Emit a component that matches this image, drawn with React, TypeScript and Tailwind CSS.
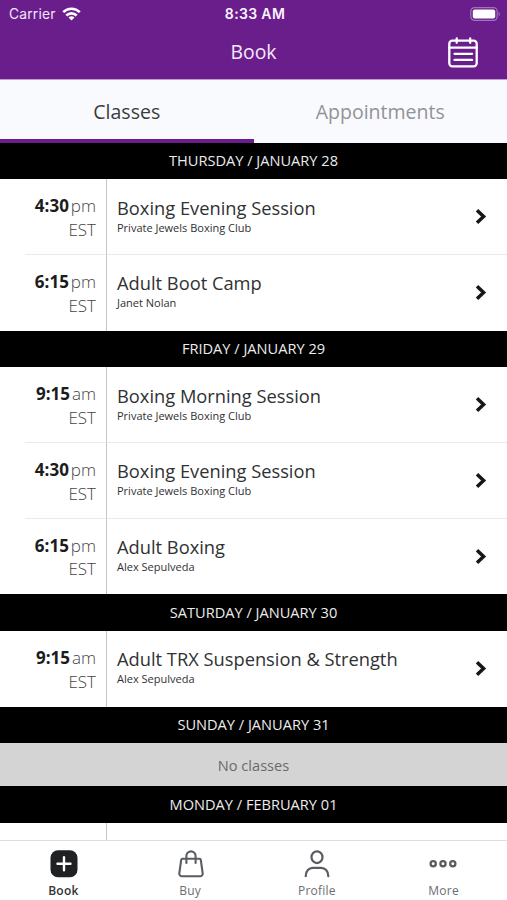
import { useState } from "react";

type ClassItem = { time: string; period: string; title: string; staff: string };
type Day = { label: string; classes: ClassItem[] };

const days: Day[] = [
  {
    label: "THURSDAY / JANUARY 28",
    classes: [
      { time: "4:30", period: "pm", title: "Boxing Evening Session", staff: "Private Jewels Boxing Club" },
      { time: "6:15", period: "pm", title: "Adult Boot Camp", staff: "Janet Nolan" }
    ]
  },
  {
    label: "FRIDAY / JANUARY 29",
    classes: [
      { time: "9:15", period: "am", title: "Boxing Morning Session", staff: "Private Jewels Boxing Club" },
      { time: "4:30", period: "pm", title: "Boxing Evening Session", staff: "Private Jewels Boxing Club" },
      { time: "6:15", period: "pm", title: "Adult Boxing", staff: "Alex Sepulveda" }
    ]
  },
  {
    label: "SATURDAY / JANUARY 30",
    classes: [
      { time: "9:15", period: "am", title: "Adult TRX Suspension & Strength", staff: "Alex Sepulveda" }
    ]
  },
  { label: "SUNDAY / JANUARY 31", classes: [] }
];

const tabs = ["Classes", "Appointments"];

function StatusBar() {
  return (
    <div className="grid h-[27px] grid-cols-[1fr_auto_1fr] items-center pr-[6px] pl-[9px] font-['Inter',sans-serif] text-[13.8px] text-[#f3e6fa]">
      <div className="flex items-center gap-[6px]">
        <span className="pt-px tracking-[0.015em]">Carrier</span>
        <svg width="19" height="14" viewBox="0 0 19 14" fill="none" stroke="#fff" strokeWidth="2.6">
          <path d="M1.2 5.2a11.8 11.8 0 0 1 16.6 0" />
          <path d="M4.3 8.5a7.4 7.4 0 0 1 10.4 0" />
          <path d="M9.5 13.6 6.5 10.6a4.3 4.3 0 0 1 6 0Z" fill="#fff" stroke="none" />
        </svg>
      </div>
      <span className="text-[14px] font-semibold tracking-[0.025em] text-[#fbf3ff]">8:33 AM</span>
      <svg className="justify-self-end" width="31" height="14" viewBox="0 0 31 14" fill="none">
        <rect x="0.8" y="0.6" width="26.4" height="12.8" rx="3.8" stroke="#a272bd" strokeWidth="1.2" />
        <rect x="2.8" y="2.5" width="22.4" height="9" rx="2" fill="#fff" />
        <path d="M28.7 4.8c1.6.7 1.6 3.7 0 4.4Z" fill="#a272bd" />
      </svg>
    </div>
  );
}

function CalendarIcon() {
  return (
    <svg width="30" height="31" viewBox="0 0 30 31" fill="none" stroke="#fff" strokeWidth="2.3" strokeLinecap="round">
      <rect x="1.3" y="3.7" width="27.4" height="25.6" rx="3" />
      <path d="M1.3 10.6h27.4M8.7 1.4v4.4M22.2 1.4v4.4M6.5 16.8h17.6M6.5 22.9h17.6" />
    </svg>
  );
}

function ClassRow({ item, last }: { item: ClassItem; last: boolean }) {
  return (
    <div className="flex h-[75.75px] bg-white pl-[25px]">
      <div
        className={[
          "w-[82px] shrink-0 border-r border-r-[#c4c4c4] pt-[15.2px] pr-[10px] text-right text-[17px] leading-[23.5px]",
          last ? "" : "border-b border-b-[#e9e9e9]"
        ].join(" ")}
      >
        <div className="whitespace-nowrap">
          <span className="font-bold text-[#1c1c1c]">{item.time}</span>
          <span className="ml-[2px] font-light text-[#444]">{item.period}</span>
        </div>
        <div className="font-light text-[#444]">EST</div>
      </div>
      <div
        className={[
          "flex grow items-start justify-between pl-[10px] pr-[19px]",
          last ? "" : "border-b border-b-[#e9e9e9]"
        ].join(" ")}
      >
        <div className="whitespace-nowrap text-[#303133]">
          <div className="pt-[15.5px] text-[18.3px] leading-[25px]">{item.title}</div>
          <div className="text-[11px] leading-[16px]">{item.staff}</div>
        </div>
        <svg className="mt-[29px]" width="14" height="17" viewBox="0 0 14 17" fill="none" stroke="#161616" strokeWidth="3.5">
          <path d="M3 2.2 9.6 8.5 3 14.8" />
        </svg>
      </div>
    </div>
  );
}

function DayHeader({ label }: { label: string }) {
  return (
    <div className="flex h-[36.5px] items-center justify-center bg-black pt-[0.6px] text-[14.6px] text-[#ececec]">
      {label}
    </div>
  );
}

const navItems = [
  {
    label: "Book",
    icon: (
      <svg className="ml-px" width="28" height="28" viewBox="0 0 28 28">
        <rect x="0.5" y="0.3" width="27" height="27" rx="7.5" fill="#1f2123" />
        <path d="M14 7.3v13M7.5 13.8h13" stroke="#fff" strokeWidth="2.4" strokeLinecap="round" />
      </svg>
    )
  },
  {
    label: "Buy",
    icon: (
      <svg className="ml-px" width="28" height="28" viewBox="0 0 28 28" fill="none" stroke="#595d61" strokeWidth="2.1" strokeLinecap="round" strokeLinejoin="round">
        <path d="M5.6 8.7h16.8a1.4 1.4 0 0 1 1.4 1.2l1.9 13.4a2.6 2.6 0 0 1-2.6 2.9H4.9a2.6 2.6 0 0 1-2.6-2.9L4.2 9.9a1.4 1.4 0 0 1 1.4-1.2Z" />
        <path d="M9.4 13V6a4.6 4.6 0 0 1 9.2 0V13" />
      </svg>
    )
  },
  {
    label: "Profile",
    icon: (
      <svg width="28" height="28" viewBox="0 0 28 28" fill="none" stroke="#595d61" strokeWidth="2.2" strokeLinecap="round">
        <ellipse cx="14" cy="7.2" rx="5.5" ry="5.9" />
        <path d="M2.7 26.2c0-5.2 3.4-8.3 7-8.3h8.6c3.6 0 7 3.1 7 8.3" />
      </svg>
    )
  },
  {
    label: "More",
    icon: (
      <svg className="mr-px" width="28" height="28" viewBox="0 0 28 28" fill="none" stroke="#595d61" strokeWidth="2.3">
        <circle cx="4.2" cy="13.7" r="2.6" />
        <circle cx="14" cy="13.7" r="2.6" />
        <circle cx="23.8" cy="13.7" r="2.6" />
      </svg>
    )
  }
];

export default function App() {
  const [tab, setTab] = useState("Classes");
  const [page, setPage] = useState("Book");

  return (
    <div className="flex h-[900px] w-[507px] flex-col overflow-hidden bg-white font-['Open_Sans',sans-serif]">
      <header className="h-[79px] shrink-0 bg-[#6a1e8c]">
        <StatusBar />
        <div className="grid h-[50px] grid-cols-[1fr_auto_1fr] items-center pr-[29px]">
          <h1 className="col-start-2 pl-[29px] text-[19.4px] text-[#f6e9fc]">Book</h1>
          <button className="justify-self-end" aria-label="Calendar">
            <CalendarIcon />
          </button>
        </div>
      </header>

      <nav className="grid h-[63.6px] shrink-0 grid-cols-2 border-t border-t-[#c39bd4] bg-[#f9fafd]">
        {tabs.map((t) => (
          <button
            key={t}
            onClick={() => setTab(t)}
            className={[
              "border-b-4 pt-[4px] text-[19.5px]",
              tab === t ? "border-b-[#6a1e8c] text-[#3a3c3e]" : "border-b-transparent text-[#919396]"
            ].join(" ")}
          >
            {t}
          </button>
        ))}
      </nav>

      <main className="min-h-0 grow overflow-hidden">
        {days.map((day) => (
          <section key={day.label}>
            <DayHeader label={day.label} />
            {day.classes.map((item, i) => (
              <ClassRow key={item.time} item={item} last={i === day.classes.length - 1} />
            ))}
            {day.classes.length === 0 && (
              <div className="flex h-[43px] items-center justify-center bg-[#d4d4d4] pt-[2px] text-[14.6px] text-[#6a6a6a]">
                No classes
              </div>
            )}
          </section>
        ))}
        <DayHeader label="MONDAY / FEBRUARY 01" />
        <div className="h-[76px] w-[107px] border-r border-r-[#c4c4c4]" />
      </main>

      <footer className="grid h-[60px] shrink-0 grid-cols-4 border-t border-t-[#dedede] bg-white">
        {navItems.map((it) => (
          <button
            key={it.label}
            onClick={() => setPage(it.label)}
            className={[
              "flex flex-col items-center pt-[9px] text-[12px] leading-[16px] tracking-[0.02em]",
              page === it.label ? "font-semibold text-[#333537]" : "font-medium text-[#6a6d70]"
            ].join(" ")}
          >
            {it.icon}
            <span className="mt-[5px]">{it.label}</span>
          </button>
        ))}
      </footer>
    </div>
  );
}
